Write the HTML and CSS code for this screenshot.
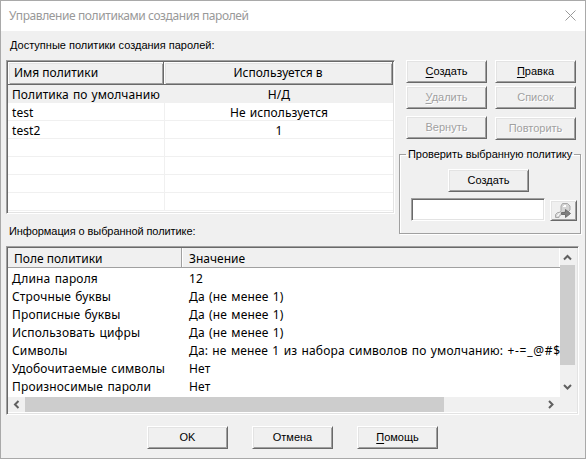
FILE: index.html
```html
<!DOCTYPE html>
<html lang="ru">
<head>
<meta charset="utf-8">
<title>Управление политиками создания паролей</title>
<link rel="stylesheet" href="styles.css">
</head>
<body>
<div class="window">
  <header class="titlebar">
    <span class="title">Управление политиками создания паролей</span>
    <svg class="close" width="11" height="11" viewBox="0 0 11 11"><path d="M.5 .5l10 10M10.5 .5l-10 10"/></svg>
  </header>
  <main class="content">
    <div class="upper">
      <section class="available">
        <div class="label label-top">Доступные политики создания паролей:</div>
        <div class="list policies">
          <div class="phead"><span class="name">Имя политики</span><span class="used">Используется в</span></div>
          <div class="prow selected"><span>Политика по умолчанию</span><span>Н/Д</span></div>
          <div class="prow"><span>test</span><span>Не используется</span></div>
          <div class="prow"><span>test2</span><span>1</span></div>
          <div class="prow"><span></span><span></span></div>
          <div class="prow"><span></span><span></span></div>
          <div class="prow"><span></span><span></span></div>
          <div class="prow"><span></span><span></span></div>
        </div>
      </section>
      <section class="side">
        <div class="actions">
          <button class="btn"><span><u>С</u>оздать</span></button>
          <button class="btn"><span><u>П</u>равка</span></button>
          <button class="btn off"><span><u>У</u>далить</span></button>
          <button class="btn off"><span>Список</span></button>
          <button class="btn off undo"><span>Вернуть</span></button>
          <button class="btn off redo"><span>Повторить</span></button>
        </div>
        <fieldset class="group">
          <legend>Проверить выбранную политику</legend>
          <button class="btn"><span>Создать</span></button>
          <div class="test">
            <input type="text" class="field">
            <button class="btn icon">
              <svg width="17" height="17" viewBox="0 0 17 17">
                <path class="key" d="M7.500 1.500h5l2.500 2.500v4l-2 2H9l-5 4.500v1H.5v-3l2-2h2l1.500-2V4z"/>
                <path class="shine" d="M8 4.500h3M9 3.500h2M3 12.500l2-1M2 14l2-1"/>
                <path class="arrow" d="M6.500 10.500h4v-3l5 4-5 4v-3h-4z"/>
              </svg>
            </button>
          </div>
        </fieldset>
      </section>
    </div>
    <div class="label label-info">Информация о выбранной политике:</div>
    <div class="list details">
      <div class="view">
        <div class="dhead"><span>Поле политики</span><span>Значение</span></div>
        <div class="drow"><span>Длина пароля</span><span>12</span></div>
        <div class="drow"><span>Строчные буквы</span><span>Да (не менее 1)</span></div>
        <div class="drow"><span>Прописные буквы</span><span>Да (не менее 1)</span></div>
        <div class="drow"><span>Использовать цифры</span><span>Да (не менее 1)</span></div>
        <div class="drow"><span>Символы</span><span>Да: не менее 1 из набора символов по умолчанию: <span class="chars">+-=_@#$</span></span></div>
        <div class="drow"><span>Удобочитаемые символы</span><span>Нет</span></div>
        <div class="drow"><span>Произносимые пароли</span><span>Нет</span></div>
      </div>
      <div class="vbar">
        <svg width="17" height="17" viewBox="0 0 17 17"><path d="M4 11.500L7.500 8 11 11.500"/></svg>
        <div class="vthumb"></div>
        <svg class="down" width="17" height="17" viewBox="0 0 17 17"><path d="M4 6l3.500 3.500L11 6"/></svg>
      </div>
      <div class="hbar">
        <svg width="17" height="15" viewBox="0 0 17 15"><path d="M10.500 4L7 7.500l3.500 3.500"/></svg>
        <div class="hthumb"></div>
        <svg class="right" width="17" height="15" viewBox="0 0 17 15"><path d="M6 4l3.500 3.500L6 11"/></svg>
      </div>
    </div>
    <footer class="footer">
      <button class="btn"><span>OK</span></button>
      <button class="btn"><span>Отмена</span></button>
      <button class="btn"><span><u>П</u>омощь</span></button>
    </footer>
  </main>
</div>
</body>
</html>
```
FILE: styles.css
```css
* { box-sizing: border-box; }
body { margin: 0; font: 12px/18px "Noto Sans", sans-serif; color: #000; }
.window { width: 586px; height: 459px; border: 1px solid #a9a9a9; background: #f0f0f0; overflow: hidden; }
.titlebar { display: flex; justify-content: space-between; height: 30px; padding: 6px 9px 0 8px; background: #fff; color: #999; }
.title { white-space: nowrap; font-size: 12px; letter-spacing: -.41px; }
.close { margin-top: 3px; fill: none; stroke: #999; }
.content { padding: 0 4px 0 5px; }
.upper { display: flex; height: 183px; }
.available { flex: none; width: 389px; margin-right: 4px; }
.label { font: 11px/14px "Liberation Sans", sans-serif; white-space: nowrap; padding-left: 4px; }
.label-top { height: 29px; padding-top: 7px; }
.label-info { height: 32px; padding: 10px 0 0 3px; letter-spacing: -.08px; }
.list { border: 1px solid; border-color: #a0a0a0 #fff #fff #a0a0a0; box-shadow: inset 1px 1px #696969, inset -1px -1px #e3e3e3; background: #fff; }
.policies { height: 154px; padding: 1px; }
.phead { display: grid; grid-template-columns: 156px 1fr; height: 21px; line-height: 22px; }
.phead span { border: 1px solid #696969; border-width: 0 1px 1px 0; box-shadow: inset 1px 1px #fff, inset 2px 2px #e3e3e3, inset -1px -1px #a0a0a0; background: #f0f0f0; }
.phead .name { padding-left: 6px; }
.phead .used { text-align: center; }
.prow { display: grid; grid-template-columns: 157px 1fr; height: 18px; border-bottom: 1px solid #f0f0f0; line-height: 20px; white-space: nowrap; word-spacing: 1px; letter-spacing: .06px; }
.prow span { padding-left: 4px; height: 17px; }
.prow span:first-child { border-right: 1px solid #f0f0f0; }
.prow span:last-child { padding: 0; text-align: center; }
.prow.selected { height: 20px; padding-top: 2px; background: #f0f0f0; }
.side { flex: none; width: 182px; padding-top: 29px; }
.actions { display: grid; grid-template-columns: 81px 81px; grid-template-rows: 23px 23px 24px; column-gap: 8px; row-gap: 3px; padding-left: 7px; }
.undo { margin-top: 4px; }
.redo { margin-top: 5px; }
.btn { display: flex; align-items: center; justify-content: center; width: 81px; height: 23px; padding: 0 0 1px; border: 1px solid; border-color: #fff #696969 #696969 #fff; box-shadow: inset 1px 1px #e3e3e3, inset -1px -1px #a0a0a0; background: #f0f0f0; font: 11px/14px "Liberation Sans", sans-serif; color: #000; }
.btn u { text-underline-offset: 2px; text-decoration-thickness: 1px; }
.btn.off { color: #a0a0a0; text-shadow: 1px 1px #fff; }
.group { height: 87px; margin: 11px 0 0; padding: 0; border: 1px solid #a0a0a0; box-shadow: inset 1px 1px #fff, 1px 1px #fff; font: 11px/14px "Liberation Sans", sans-serif; min-width: 0; }
.group legend { margin-left: 6px; padding: 0 2px; white-space: nowrap; letter-spacing: -.04px; }
.group > .btn { margin: 8px 0 0 48px; }
.test { display: flex; gap: 5px; padding: 6px 0 0 11px; }
.field { width: 134px; height: 23px; padding: 0; border: 1px solid; border-color: #a0a0a0 #fff #fff #a0a0a0; box-shadow: inset 1px 1px #696969, inset -1px -1px #e3e3e3; background: #fff; }
.btn.icon { width: 27px; height: 21px; margin-top: 2px; padding: 0; }
.btn.icon svg { flex: none; }
.key { fill: #d4d4d4; stroke: #a8a8a8; }
.shine { fill: none; stroke: #fff; }
.arrow { fill: #808080; stroke: #707070; }
.details { display: grid; grid-template-columns: 552px 17px; grid-template-rows: 149px 15px; width: 573px; height: 169px; padding: 1px; }
.view { overflow: hidden; white-space: nowrap; }
.dhead { display: grid; grid-template-columns: 174px 1fr; height: 20px; line-height: 22px; background: #f0f0f0; border-bottom: 1px solid #a0a0a0; }
.dhead span { height: 19px; padding-left: 6px; border-right: 1px solid #a0a0a0; }
.dhead span:last-child { padding-left: 6px; border-left: 1px solid #fff; border-right: 1px solid #fff; }
.drow { display: grid; grid-template-columns: 181px 1fr; height: 18px; line-height: 22px; word-spacing: 1px; letter-spacing: .15px; }
.drow span:first-child { padding-left: 4px; }
.drow .chars:first-child { padding-left: 0; letter-spacing: .7px; }
.vbar, .hbar { background: #f0f0f0; }
.vbar svg, .hbar svg { display: block; fill: none; stroke: #606060; stroke-width: 2; }
.vthumb { width: 15px; height: 100px; background: #cdcdcd; }
.down { margin-top: 14px; }
.hbar { display: flex; grid-column: 1 / 3; }
.hthumb { width: 419px; background: #cdcdcd; }
.right { margin-left: 99px; }
.footer { display: flex; gap: 24px; padding: 11px 0 0 141px; }
```
